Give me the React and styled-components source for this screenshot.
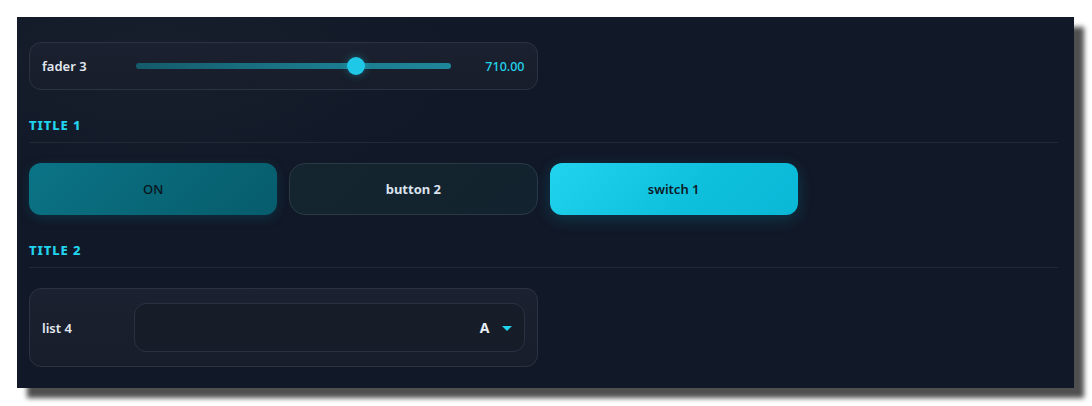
import React from "react";
import styled, { createGlobalStyle } from "styled-components";

const Global = createGlobalStyle`
  html, body { margin: 0; padding: 0; background: #ffffff; }
  body { font-family: "Noto Sans", "Open Sans", sans-serif; }
  * { box-sizing: border-box; }
`;

const Stage = styled.div`
  padding: 17px;
`;

const Panel = styled.div`
  width: 1057px;
  height: 371px;
  background: radial-gradient(ellipse 420px 200px at 140px 40px, #171e2c 0%, #111827 70%), #111827;
  box-shadow: 10px 10px 5px #4f4f4f;
  padding: 25px 16px 21px 12px;
  display: flex;
  flex-direction: column;
`;

const Grid = styled.div`
  display: grid;
  grid-template-columns: repeat(4, 1fr);
  gap: 12px;
`;

const Card = styled.div`
  grid-column: span 2;
  height: ${(p) => p.$h}px;
  border: 1px solid #2b3343;
  border-radius: 12px;
  background: linear-gradient(180deg, #1b2130 0%, #171d2a 100%);
  display: flex;
  align-items: center;
  padding: 0 12px 0 12px;
`;

const Label = styled.span`
  width: ${(p) => p.$w}px;
  flex: none;
  color: #e2e8f0;
  font-size: 13px;
  font-weight: 600;
`;

const Track = styled.div`
  position: relative;
  width: 315px;
  height: 6px;
  border-radius: 3px;
  background: linear-gradient(90deg, #145b6b 0%, #1b7a8d 60%, #1e8799 100%);
`;

const Thumb = styled.div`
  position: absolute;
  top: 50%;
  width: 18px;
  height: 18px;
  margin: -9px 0 0 -9px;
  border-radius: 50%;
  background: #1ec8e6;
  box-shadow: 0 0 8px rgba(34, 211, 238, 0.35);
`;

const Value = styled.span`
  margin-left: auto;
  color: #22d3ee;
  font-size: 12.5px;
  font-weight: 500;
`;

const Title = styled.div`
  margin-top: ${(p) => p.$mt}px;
  padding-bottom: 9px;
  border-bottom: 1px solid #222a38;
  color: #22d3ee;
  font-size: 13px;
  line-height: 16px;
  font-weight: 800;
  letter-spacing: 0.9px;
  margin-bottom: 20px;
`;

const variants = {
  on: `
    background: linear-gradient(135deg, #0b7487 0%, #086575 60%, #065c6c 100%);
    color: #08141c;
    font-weight: 500;
    box-shadow: 0 3px 12px rgba(8, 110, 135, 0.28);
    border: none;
  `,
  off: `
    background: linear-gradient(135deg, #14252f 0%, #12232f 100%);
    color: #dbe3ee;
    font-weight: 700;
    border: 1px solid #2a3946;
    border-radius: 16px;
  `,
  active: `
    background: linear-gradient(135deg, #22d3ee 0%, #0ebfdc 60%, #0ab8d6 100%);
    color: #0e1a26;
    font-weight: 600;
    box-shadow: 0 4px 16px rgba(6, 182, 212, 0.22);
    border: none;
  `,
};

const Btn = styled.div`
  height: 52px;
  border-radius: 12px;
  display: flex;
  align-items: center;
  justify-content: center;
  font-size: 13px;
  ${(p) => variants[p.$v]}
`;

const Select = styled.div`
  flex: 1;
  height: 49px;
  border: 1px solid #2a3242;
  border-radius: 12px;
  background: #161c28;
  display: flex;
  align-items: center;
  justify-content: flex-end;
  gap: 12px;
  padding-right: 12px;
  color: #e8edf4;
  font-size: 14px;
  font-weight: 700;
`;

const Caret = styled.span`
  width: 0;
  height: 0;
  border-left: 5px solid transparent;
  border-right: 5px solid transparent;
  border-top: 5px solid #22d3ee;
  margin-top: 2px;
`;

export default function App() {
  return (
    <>
      <Global />
      <Stage>
        <Panel>
          <Grid>
            <Card $h={48}>
              <Label $w={94}>fader 3</Label>
              <Track>
                <Thumb style={{ left: `${(220 / 315) * 100}%` }} />
              </Track>
              <Value>710.00</Value>
            </Card>
          </Grid>
          <Title $mt={27}>TITLE 1</Title>
          <Grid>
            <Btn $v="on">ON</Btn>
            <Btn $v="off">button 2</Btn>
            <Btn $v="active">switch 1</Btn>
          </Grid>
          <Title $mt={27}>TITLE 2</Title>
          <Grid>
            <Card $h={79}>
              <Label $w={92}>list 4</Label>
              <Select>
                A<Caret />
              </Select>
            </Card>
          </Grid>
        </Panel>
      </Stage>
    </>
  );
}
